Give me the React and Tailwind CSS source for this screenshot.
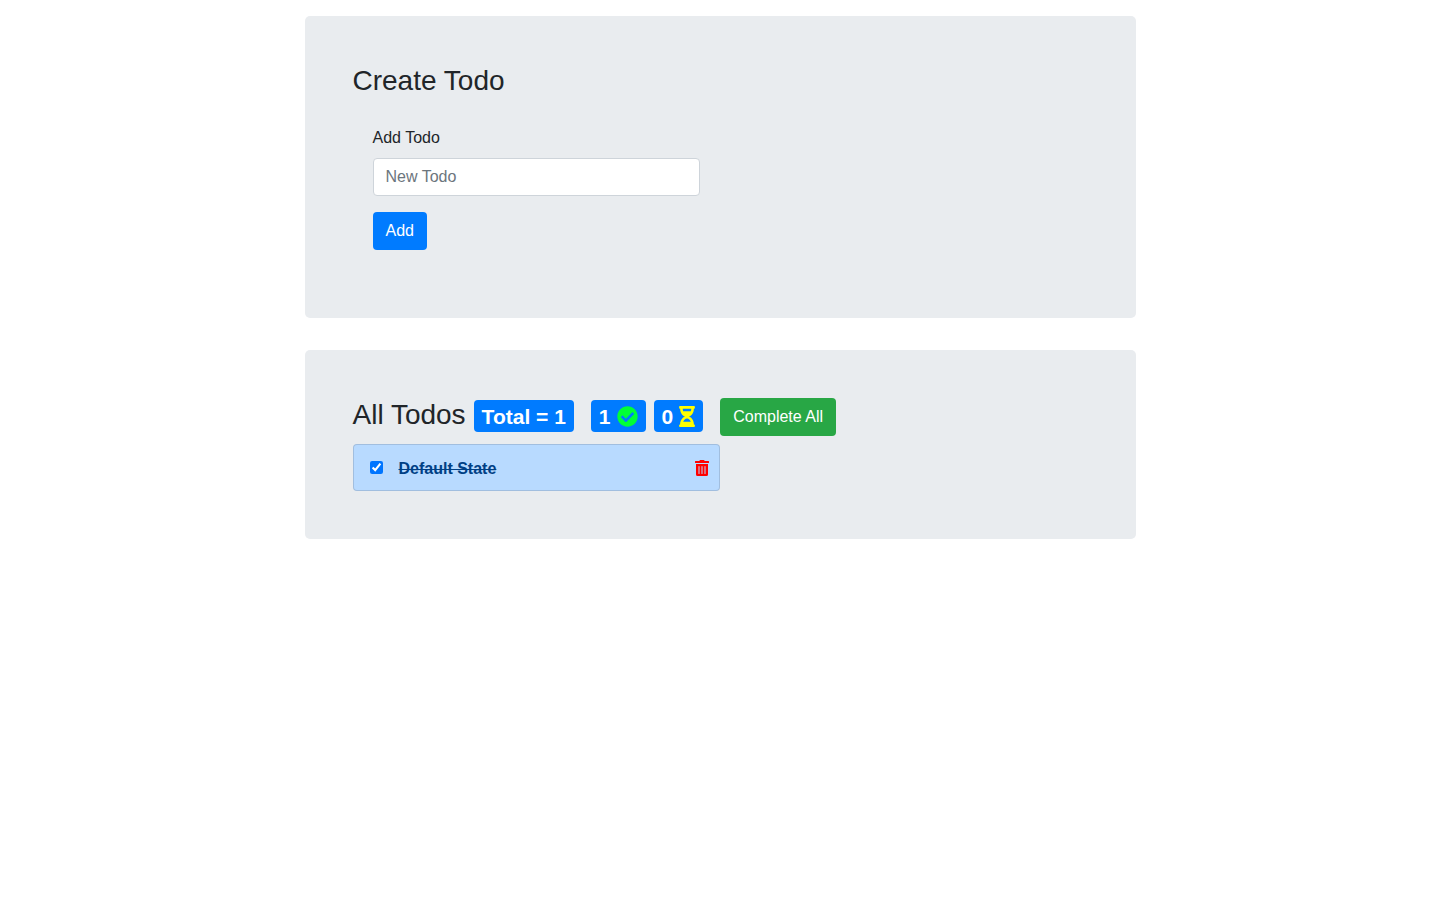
import { useState } from "react";
import { FaCheckCircle, FaHourglassHalf, FaTrashAlt } from "react-icons/fa";

function Panel({ children }) {
  return <section className="mb-8 rounded-[5px] bg-[#e9ecef] p-12">{children}</section>;
}

function Badge({ children }) {
  return (
    <span className="mb-0.5 flex items-center gap-1.5 rounded bg-[#007bff] px-2 pt-[5px] pb-[3px] text-[21px] leading-6 font-bold text-white">
      {children}
    </span>
  );
}

function CreateTodo({ onAdd }) {
  const [title, setTitle] = useState("");

  const submit = (event) => {
    event.preventDefault();
    if (!title.trim()) return;
    onAdd(title.trim());
    setTitle("");
  };

  return (
    <Panel>
      <h3 className="mb-2 text-[28px] leading-[34px] font-medium">Create Todo</h3>
      <form onSubmit={submit} className="w-1/2 p-5">
        <label htmlFor="new-todo" className="mb-2 block">
          Add Todo
        </label>
        <input
          id="new-todo"
          type="text"
          placeholder="New Todo"
          value={title}
          onChange={(event) => setTitle(event.target.value)}
          className="mb-4 block h-[38px] w-full rounded border border-[#ced4da] bg-white px-3 text-[#495057] placeholder:text-[#6c757d]"
        />
        <button type="submit" className="block h-[38px] rounded bg-[#007bff] px-[13px] text-white">
          Add
        </button>
      </form>
    </Panel>
  );
}

function TodoItem({ todo, onToggle, onDelete }) {
  const id = `todo-${todo.id}`;
  return (
    <li className="flex h-[47px] items-center border border-[#00000020] bg-[#b8daff] pr-2.5 pl-4 text-[#004085] first:rounded-t last:rounded-b">
      <input id={id} type="checkbox" checked={todo.done} onChange={() => onToggle(todo.id)} className="size-[13px]" />
      <label htmlFor={id} className={todo.done ? "ml-4 pt-0.5 font-bold line-through" : "ml-4 pt-0.5 font-bold"}>
        {todo.title}
      </label>
      <button type="button" aria-label="Delete todo" onClick={() => onDelete(todo.id)} className="ml-auto text-[#ff0000]">
        <FaTrashAlt className="h-4 w-3.5" />
      </button>
    </li>
  );
}

export default function App() {
  const [todos, setTodos] = useState([{ id: 1, title: "Default State", done: true }]);
  const completed = todos.filter((todo) => todo.done).length;

  const add = (title) => setTodos([...todos, { id: Date.now(), title, done: false }]);
  const toggle = (id) => setTodos(todos.map((todo) => (todo.id === id ? { ...todo, done: !todo.done } : todo)));
  const remove = (id) => setTodos(todos.filter((todo) => todo.id !== id));
  const completeAll = () => setTodos(todos.map((todo) => ({ ...todo, done: true })));

  return (
    <main className="mx-auto max-w-[831px] pt-4 font-['Liberation_Sans',Arial,sans-serif] text-base text-[#212529]">
      <CreateTodo onAdd={add} />
      <Panel>
        <div className="mb-2 flex flex-wrap items-center gap-x-[17px]">
          <div className="flex items-center gap-2">
            <h3 className="pb-1 text-[28px] leading-[34px] font-medium">All Todos</h3>
            <Badge>{`Total = ${todos.length}`}</Badge>
          </div>
          <div className="flex items-center gap-2">
            <Badge>
              {completed}
              <FaCheckCircle className="mb-0.5 size-[21px] text-[#00ff37]" />
            </Badge>
            <Badge>
              {todos.length - completed}
              <FaHourglassHalf className="mb-0.5 h-[21px] w-4 text-[#ffff00]" />
            </Badge>
          </div>
          <button type="button" onClick={completeAll} className="h-[38px] rounded bg-[#28a745] px-[13px] text-white">
            Complete All
          </button>
        </div>
        <ul className="w-1/2">
          {todos.map((todo) => (
            <TodoItem key={todo.id} todo={todo} onToggle={toggle} onDelete={remove} />
          ))}
        </ul>
      </Panel>
    </main>
  );
}
